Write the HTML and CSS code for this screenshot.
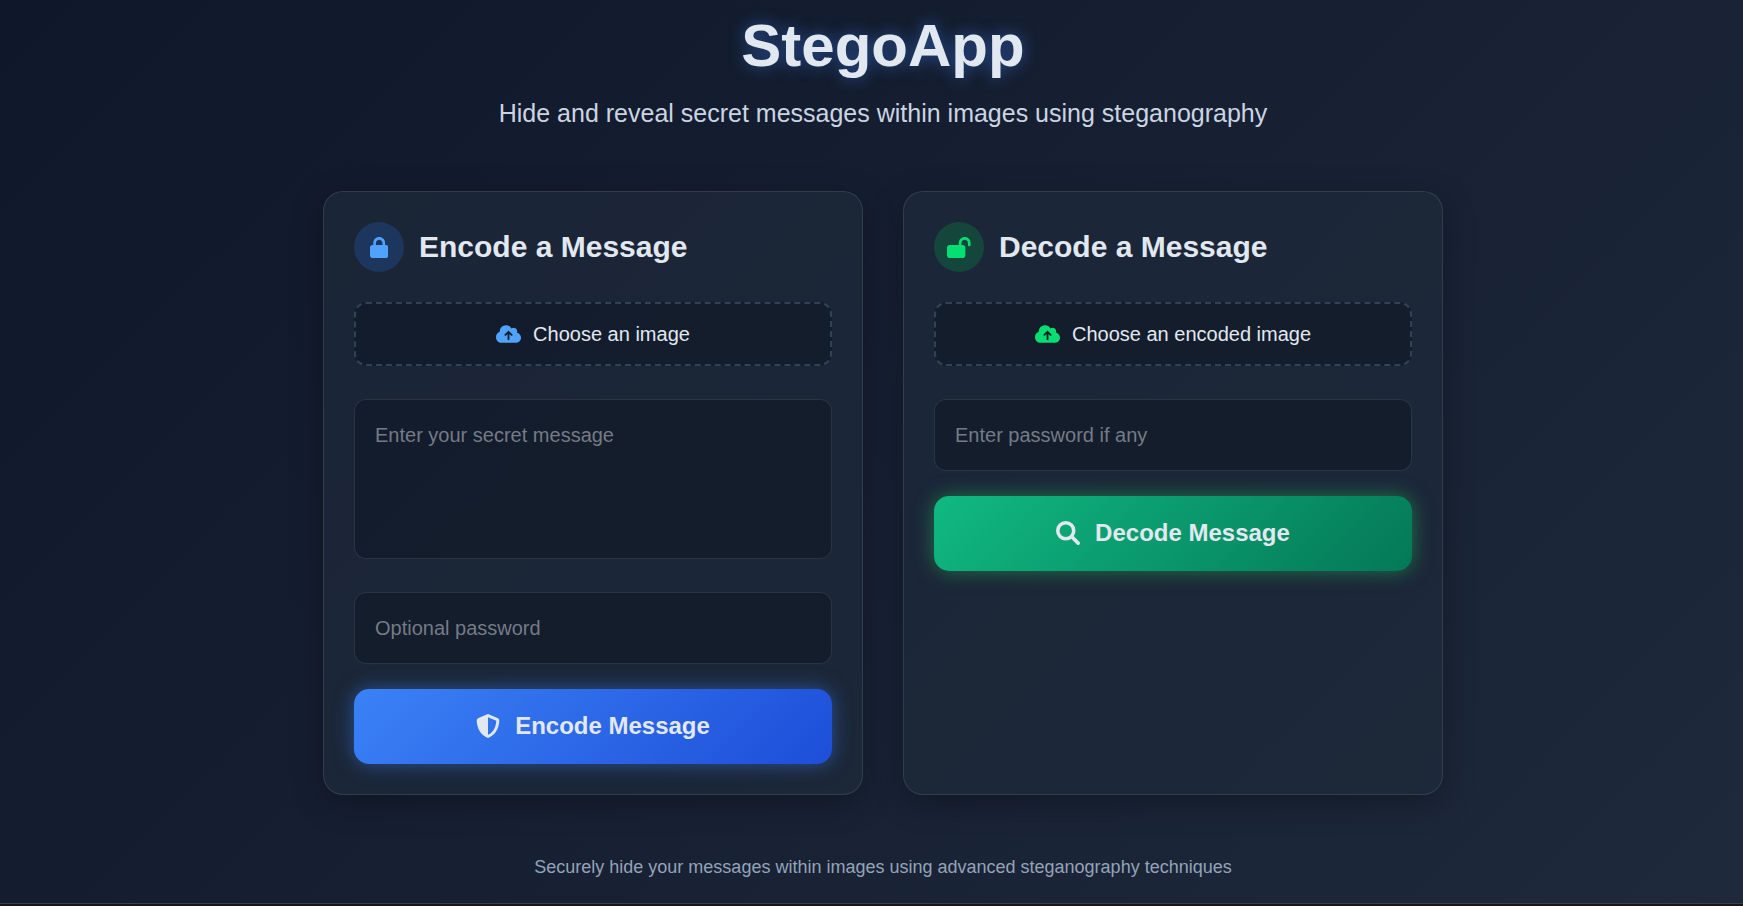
FILE: index.html
```html
<!DOCTYPE html>
<html lang="en">
<head>
  <meta charset="UTF-8">
  <meta name="viewport" content="width=device-width, initial-scale=1.0">
  <title>StegoApp</title>
  <link rel="stylesheet" href="styles.css">
</head>
<body>
  <div class="page">
    <header>
      <h1>StegoApp</h1>
      <p class="subtitle">Hide and reveal secret messages within images using steganography</p>
    </header>

    <main class="cards">
      <!-- Encode form -->
      <form class="card encode">
        <div class="card-header">
          <span class="card-icon">
            <svg class="icon" viewBox="0 0 448 512" aria-hidden="true"><path d="M144 144v48H304V144c0-44.2-35.8-80-80-80s-80 35.8-80 80zM80 192V144C80 64.5 144.5 0 224 0s144 64.5 144 144v48h16c35.3 0 64 28.7 64 64V448c0 35.3-28.7 64-64 64H64c-35.3 0-64-28.7-64-64V256c0-35.3 28.7-64 64-64H80z"/></svg>
          </span>
          <h2>Encode a Message</h2>
        </div>

        <label class="file-label" for="encodeImage">
          <svg class="icon" viewBox="0 0 640 512" aria-hidden="true"><path d="M144 480C64.5 480 0 415.5 0 336c0-62.8 40.2-116.2 96.2-135.9c-.1-2.7-.2-5.4-.2-8.1c0-88.4 71.6-160 160-160c59.3 0 111 32.2 138.7 80.2C409.9 102 428.3 96 448 96c53 0 96 43 96 96c0 12.2-2.3 23.8-6.4 34.6C596 238.4 640 290.1 640 352c0 70.7-57.3 128-128 128H144zm79-217c-9.4 9.4-9.4 24.6 0 33.9s24.6 9.4 33.9 0l39-39V392c0 13.3 10.7 24 24 24s24-10.7 24-24V257.9l39 39c9.4 9.4 24.6 9.4 33.9 0s9.4-24.6 0-33.9l-80-80c-9.4-9.4-24.6-9.4-33.9 0l-80 80z"/></svg>
          <span>Choose an image</span>
        </label>
        <input type="file" id="encodeImage" accept="image/*" hidden>

        <textarea class="field" aria-label="Secret message" placeholder="Enter your secret message"></textarea>
        <input class="field" type="password" aria-label="Optional password" placeholder="Optional password">

        <button class="btn" type="button">
          <svg class="icon" viewBox="0 0 512 512" aria-hidden="true"><path d="M256 0c4.6 0 9.2 1 13.4 2.9L457.7 82.8c22 9.3 38.4 31 38.3 57.2c-.5 99.2-41.3 280.7-213.6 363.2c-16.7 8-36.1 8-52.8 0C57.3 420.7 16.5 239.2 16 140c-.1-26.2 16.3-47.9 38.3-57.2L242.7 2.9C246.8 1 251.4 0 256 0zm0 66.8V444.8C394 378 431.1 230.1 432 141.4L256 66.8l0 0z"/></svg>
          <span>Encode Message</span>
        </button>
      </form>

      <!-- Decode form -->
      <form class="card decode">
        <div class="card-header">
          <span class="card-icon">
            <svg class="icon" viewBox="0 0 576 512" aria-hidden="true"><path d="M352 144c0-44.2 35.8-80 80-80s80 35.8 80 80v48c0 17.7 14.3 32 32 32s32-14.3 32-32V144C576 64.5 511.5 0 432 0S288 64.5 288 144v48H64c-35.3 0-64 28.7-64 64V448c0 35.3 28.7 64 64 64H384c35.3 0 64-28.7 64-64V256c0-35.3-28.7-64-64-64H352V144z"/></svg>
          </span>
          <h2>Decode a Message</h2>
        </div>

        <label class="file-label" for="decodeImage">
          <svg class="icon" viewBox="0 0 640 512" aria-hidden="true"><path d="M144 480C64.5 480 0 415.5 0 336c0-62.8 40.2-116.2 96.2-135.9c-.1-2.7-.2-5.4-.2-8.1c0-88.4 71.6-160 160-160c59.3 0 111 32.2 138.7 80.2C409.9 102 428.3 96 448 96c53 0 96 43 96 96c0 12.2-2.3 23.8-6.4 34.6C596 238.4 640 290.1 640 352c0 70.7-57.3 128-128 128H144zm79-217c-9.4 9.4-9.4 24.6 0 33.9s24.6 9.4 33.9 0l39-39V392c0 13.3 10.7 24 24 24s24-10.7 24-24V257.9l39 39c9.4 9.4 24.6 9.4 33.9 0s9.4-24.6 0-33.9l-80-80c-9.4-9.4-24.6-9.4-33.9 0l-80 80z"/></svg>
          <span>Choose an encoded image</span>
        </label>
        <input type="file" id="decodeImage" accept="image/*" hidden>

        <input class="field" type="password" aria-label="Password" placeholder="Enter password if any">

        <button class="btn" type="button">
          <svg class="icon search" viewBox="0 0 512 512" aria-hidden="true"><circle cx="208" cy="208" r="170"/><path d="M336 336L472 472"/></svg>
          <span>Decode Message</span>
        </button>
      </form>
    </main>

    <footer>Securely hide your messages within images using advanced steganography techniques</footer>
  </div>
  <div class="bottom-bar"></div>
</body>
</html>
```

FILE: styles.css
```css
* {
  box-sizing: border-box;
  margin: 0;
  padding: 0;
}

body {
  display: flex;
  flex-direction: column;
  min-height: 100vh;
  font-family: Arial, "Liberation Sans", sans-serif;
  color: #e2e8f0;
  background: linear-gradient(135deg, #0f172a, #1e293b);
}

.page {
  flex: 1;
  padding: 16px 0 25px 23px;
}

header {
  text-align: center;
  margin-bottom: 58px;
}

h1 {
  font-size: 60px;
  line-height: 60px;
  margin-bottom: 17px;
  text-shadow: 0 0 15px rgba(59, 130, 246, 0.5);
}

.subtitle {
  font-size: 25px;
  line-height: 40px;
  color: #cbd5e1;
}

.cards {
  display: grid;
  grid-template-columns: 1fr 1fr;
  gap: 40px;
  max-width: 1120px;
  margin: 0 auto;
}

.card {
  padding: 30px;
  background: rgba(30, 41, 59, 0.7);
  border: 1px solid rgba(255, 255, 255, 0.1);
  border-radius: 20px;
  box-shadow: 0 8px 32px rgba(0, 0, 0, 0.3);
}

.card-header {
  display: flex;
  align-items: center;
  gap: 15px;
  margin-bottom: 30px;
}

.card-header h2 {
  font-size: 30px;
}

.card-icon {
  display: flex;
  align-items: center;
  justify-content: center;
  width: 50px;
  height: 50px;
  border-radius: 50%;
}

.icon {
  height: 20px;
  fill: currentColor;
}

.card-icon .icon {
  height: 21px;
}

.encode .card-icon {
  background: rgba(43, 127, 255, 0.2);
}

.decode .card-icon {
  background: rgba(0, 201, 80, 0.2);
}

.encode .card-icon,
.encode .file-label .icon {
  color: #51a2ff;
}

.decode .card-icon,
.decode .file-label .icon {
  color: #05df72;
}

.file-label {
  display: flex;
  align-items: center;
  justify-content: center;
  gap: 12px;
  height: 64px;
  margin-bottom: 33px;
  font-size: 20px;
  background: rgba(15, 23, 36, 0.6);
  border: 2px dashed #334155;
  border-radius: 12px;
  cursor: pointer;
}

.field {
  display: block;
  width: 100%;
  height: 72px;
  padding: 20px;
  font: inherit;
  font-size: 20px;
  line-height: 30px;
  color: #e2e8f0;
  background: rgba(15, 23, 36, 0.6);
  border: 1px solid rgba(255, 255, 255, 0.1);
  border-radius: 12px;
  outline: none;
}

.field::placeholder {
  color: #757b86;
}

textarea.field {
  height: 160px;
  margin-bottom: 33px;
  resize: none;
}

/* Action buttons */
.btn {
  display: flex;
  align-items: center;
  justify-content: center;
  gap: 15px;
  width: 100%;
  height: 75px;
  margin-top: 25px;
  padding-bottom: 2px;
  font: inherit;
  font-size: 24px;
  font-weight: bold;
  color: #e2e8f0;
  border: none;
  border-radius: 15px;
  cursor: pointer;
}

.btn .icon {
  height: 24px;
}

.search {
  fill: none;
  stroke: currentColor;
  stroke-width: 76;
  stroke-linecap: round;
}

.encode .btn {
  background: linear-gradient(135deg, #3b82f6, #1d4ed8);
  box-shadow: 0 0 20px rgba(59, 130, 246, 0.5);
}

.decode .btn {
  background: linear-gradient(135deg, #10b981, #047857);
  box-shadow: 0 0 20px rgba(34, 197, 94, 0.5);
}

footer {
  margin-top: 62px;
  text-align: center;
  font-size: 18px;
  line-height: 20px;
  color: #94a3b8;
}

.bottom-bar {
  height: 3px;
  background: #1c1517;
  border-top: 1px solid #3f3f41;
}
```
